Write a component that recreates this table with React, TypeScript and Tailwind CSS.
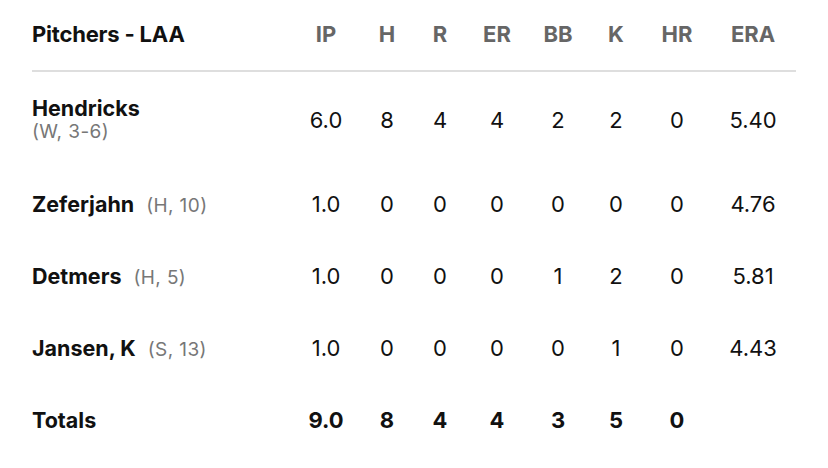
const cols = "grid grid-cols-[264px_60px_62px_44px_70px_52px_64px_58px_94px] items-center";

const headers = ["IP", "H", "R", "ER", "BB", "K", "HR", "ERA"];

type Pitcher = { name: string; note: string; stacked?: boolean; stats: string[] };

const pitchers: Pitcher[] = [
  { name: "Hendricks", note: "(W, 3-6)", stacked: true, stats: ["6.0", "8", "4", "4", "2", "2", "0", "5.40"] },
  { name: "Zeferjahn", note: "(H, 10)", stats: ["1.0", "0", "0", "0", "0", "0", "0", "4.76"] },
  { name: "Detmers", note: "(H, 5)", stats: ["1.0", "0", "0", "0", "1", "2", "0", "5.81"] },
  { name: "Jansen, K", note: "(S, 13)", stats: ["1.0", "0", "0", "0", "0", "1", "0", "4.43"] },
];

const totals = ["9.0", "8", "4", "4", "3", "5", "0", ""];

export default function App() {
  return (
    <div className="min-h-[468px] w-[828px] bg-white pl-8 pr-7 font-['Inter','Liberation_Sans',sans-serif] text-[#111]">
      <div className={`${cols} h-[70px] pb-[2px]`}>
        <div className="text-[22px] font-bold tracking-[-0.2px]">Pitchers - LAA</div>
        {headers.map((h) => (
          <div key={h} className="text-center text-[22px] font-bold text-[#666]">
            {h}
          </div>
        ))}
      </div>
      <div className="mr-1 h-[2px] bg-[#dedede]" />

      {pitchers.map((p) => (
        <div key={p.name} className={`${cols} ${p.stacked ? "h-[96px]" : "h-[72px]"}`}>
          {p.stacked ? (
            <div className="flex flex-col leading-[23px]">
              <span className="text-[21.5px] font-bold">{p.name}</span>
              <span className="text-[19px] tracking-[0.4px] text-[#777]">{p.note}</span>
            </div>
          ) : (
            <div className="flex items-baseline gap-3">
              <span className="text-[21.5px] font-bold">{p.name}</span>
              <span className="text-[19px] tracking-[0.4px] text-[#777]">{p.note}</span>
            </div>
          )}
          {p.stats.map((s, i) => (
            <div key={i} className="text-center text-[22px]">
              {s}
            </div>
          ))}
        </div>
      ))}

      <div className={`${cols} h-[72px]`}>
        <div className="text-[21.5px] font-bold">Totals</div>
        {totals.map((s, i) => (
          <div key={i} className="text-center text-[22px] font-bold">
            {s}
          </div>
        ))}
      </div>
    </div>
  );
}
